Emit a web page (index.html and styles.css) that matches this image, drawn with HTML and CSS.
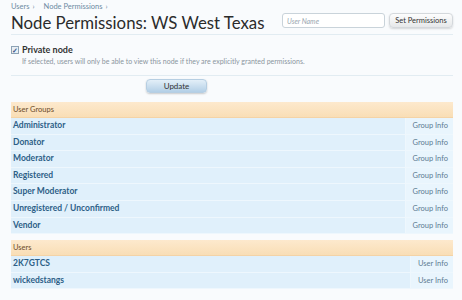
FILE: index.html
```html
<!DOCTYPE html>
<html lang="en">
  <head>
    <meta charset="UTF-8" />
    <meta name="viewport" content="width=device-width, initial-scale=1.0" />
    <title>Node Permissions: WS West Texas</title>
    <link rel="stylesheet" href="styles.css">
  </head>
  <body>
    <!-- Breadcrumb -->
    <div class="breadcrumb">
      <a href="#">Users</a><span class="sep">&rsaquo;</span>
      <a href="#">Node Permissions</a><span class="sep">&rsaquo;</span>
    </div>

    <!-- Title bar -->
    <div class="title-bar">
      <h1>Node Permissions: WS West Texas</h1>
      <form class="user-form">
        <input type="text" class="text-input" placeholder="User Name" />
        <button type="button" class="btn">Set Permissions</button>
      </form>
    </div>

    <!-- Private node option -->
    <div class="options">
      <label class="check-label">
        <span class="check-box">&#10003;</span>
        Private node
      </label>
      <p class="hint">If selected, users will only be able to view this node if they are explicitly granted permissions.</p>
    </div>

    <div class="submit-row">
      <button type="button" class="btn-update">Update</button>
    </div>

    <!-- User groups -->
    <div class="section">
      <h3 class="section-head">User Groups</h3>
      <ol class="list">
        <li class="row"><a href="#" class="name">Administrator</a><a href="#" class="info">Group Info</a></li>
        <li class="row"><a href="#" class="name">Donator</a><a href="#" class="info">Group Info</a></li>
        <li class="row"><a href="#" class="name">Moderator</a><a href="#" class="info">Group Info</a></li>
        <li class="row"><a href="#" class="name">Registered</a><a href="#" class="info">Group Info</a></li>
        <li class="row"><a href="#" class="name">Super Moderator</a><a href="#" class="info">Group Info</a></li>
        <li class="row"><a href="#" class="name">Unregistered / Unconfirmed</a><a href="#" class="info">Group Info</a></li>
        <li class="row"><a href="#" class="name">Vendor</a><a href="#" class="info">Group Info</a></li>
      </ol>
    </div>

    <!-- Users -->
    <div class="section">
      <h3 class="section-head">Users</h3>
      <ol class="list">
        <li class="row"><a href="#" class="name">2K7GTCS</a><a href="#" class="info">User Info</a></li>
        <li class="row"><a href="#" class="name">wickedstangs</a><a href="#" class="info">User Info</a></li>
      </ol>
    </div>
  </body>
</html>
```

FILE: styles.css
```css
body {
  margin: 0;
  padding: 0 9px 0 11px;
  background: #f9fbfd;
  font-family: Lato, "Liberation Sans", sans-serif;
  font-size: 8px;
  color: #333;
}

a {
  text-decoration: none;
}

.breadcrumb {
  height: 13px;
  line-height: 13px;
  font-size: 7.5px;
  color: #6e8ba3;
}

.breadcrumb a {
  color: #6e8ba3;
}

.breadcrumb .sep {
  margin: 0 7px 0 3px;
}

.title-bar {
  display: flex;
  align-items: flex-start;
  justify-content: space-between;
  padding-bottom: 1px;
  border-bottom: 1px solid #e2ecf2;
}

.title-bar h1 {
  margin: 0;
  font-size: 16.8px;
  font-weight: normal;
  line-height: 20px;
  color: #2b2b2b;
}

.user-form {
  display: flex;
  gap: 4px;
}

.text-input {
  box-sizing: border-box;
  width: 103px;
  height: 15px;
  padding: 0 4px;
  border: 1px solid #c9d3da;
  border-radius: 3px;
  background: #fff;
  font-family: inherit;
  font-size: 7px;
}

.text-input::placeholder {
  color: #9aa6b0;
  font-style: italic;
}

.btn {
  box-sizing: border-box;
  width: 64px;
  height: 15px;
  padding: 0;
  border: 1px solid #d4d8dc;
  border-radius: 4px;
  background: linear-gradient(#fdfdfd, #e6e8ea);
  box-shadow: 0 1px 2px rgba(0, 0, 0, 0.15);
  font-family: inherit;
  font-size: 7.5px;
  color: #333;
}

.options {
  padding: 9px 0 9px;
  border-bottom: 1px solid #e2ecf2;
}

.check-label {
  display: flex;
  align-items: center;
  gap: 3px;
  font-size: 9px;
  font-weight: bold;
  line-height: 11px;
  color: #333;
}

.check-box {
  box-sizing: border-box;
  width: 8px;
  height: 8px;
  border: 1px solid #8da2b4;
  background: #e9eff5;
  color: #3c5a8a;
  font-size: 7px;
  line-height: 6px;
  text-align: center;
}

.hint {
  margin: 1px 0 0 11px;
  font-size: 7px;
  line-height: 10px;
  color: #8a959e;
}

.submit-row {
  padding: 3px 0 9px 135px;
}

.btn-update {
  box-sizing: border-box;
  width: 61px;
  height: 14px;
  padding: 0;
  border: 1px solid #b6cee2;
  border-radius: 4px;
  background: linear-gradient(#e3eff8, #b3cfe6);
  box-shadow: 0 1px 2px rgba(0, 0, 0, 0.2);
  font-family: inherit;
  font-size: 8px;
  color: #333;
}

.section {
  margin-bottom: 6px;
}

.section-head {
  margin: 0;
  height: 16px;
  padding-left: 2px;
  line-height: 16px;
  font-size: 7.5px;
  font-weight: normal;
  color: #6b4b2b;
  background: linear-gradient(#fde9cd, #f9deb6);
  border-bottom: 1px solid #f4d3a6;
  box-sizing: border-box;
}

.list {
  list-style: none;
  margin: 0;
  padding: 0;
}

.row {
  display: flex;
  height: 16.6px;
  box-sizing: border-box;
  background: #e0f0fb;
  border-bottom: 1px solid #eef7fd;
}

.name {
  flex: 1;
  padding-left: 2px;
  line-height: 15px;
  font-size: 8.5px;
  font-weight: bold;
  color: #2d5f87;
}

.info {
  padding: 0 5px 0 7px;
  line-height: 15.6px;
  font-size: 7.5px;
  color: #5d7c93;
  background: #e9f5fd;
  border-left: 1px solid #eef7fd;
}
```
